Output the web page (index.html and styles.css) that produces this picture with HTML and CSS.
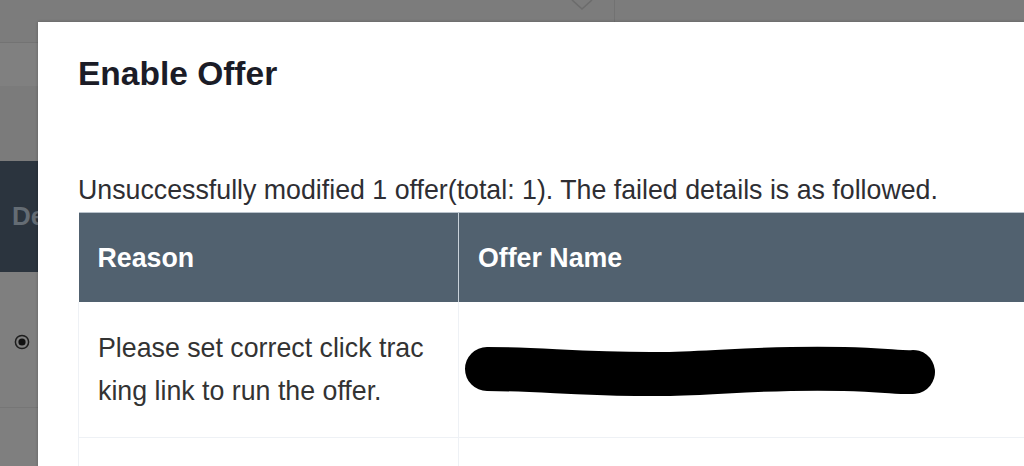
FILE: index.html
```html
<!DOCTYPE html>
<html lang="en">
<head>
<meta charset="utf-8">
<title>Enable Offer</title>
<link rel="stylesheet" href="styles.css">
</head>
<body>
<div class="page">
  <div class="bg">
    <div class="bg-top">
      <span class="bg-spacer"></span>
      <svg class="bg-chevron" width="22" height="12" viewBox="0 0 22 12"><path d="M1 1 L11 10 L21 1" fill="none" stroke="#6c6c6c" stroke-width="1.6"/></svg>
      <span class="bg-sep"></span>
    </div>
    <div class="bg-sub"></div>
    <div class="bg-gap"></div>
    <div class="bg-head">De</div>
    <div class="bg-row">
      <svg class="bg-radio" width="16" height="16" viewBox="0 0 16 16"><circle cx="8" cy="8" r="6.6" fill="none" stroke="#1e1e1e" stroke-width="1.5"/><circle cx="8" cy="8" r="3.6" fill="#111"/></svg>
    </div>
    <div class="bg-row2"></div>
  </div>

  <div class="modal">
    <h2 class="modal-title">Enable Offer</h2>
    <p class="modal-msg">Unsuccessfully modified 1 offer(total: 1). The failed details is as followed.</p>
    <table class="fail-table">
      <thead>
        <tr>
          <th class="col-reason">Reason</th>
          <th class="col-name">Offer Name</th>
        </tr>
      </thead>
      <tbody>
        <tr>
          <td class="col-reason">Please set correct click trac<br>king link to run the offer.</td>
          <td class="col-name">
            <svg class="redact" width="480" height="52" viewBox="0 0 480 52"><path d="M23 25 C 80 25, 120 31, 200 30 C 260 29, 300 23, 380 25 C 420 26, 440 29, 449 28" fill="none" stroke="#000" stroke-width="44" stroke-linecap="round"/></svg>
          </td>
        </tr>
        <tr class="row-empty">
          <td class="col-reason"></td>
          <td class="col-name"></td>
        </tr>
      </tbody>
    </table>
  </div>
</div>
</body>
</html>
```
FILE: styles.css
```css
html, body {
  margin: 0;
  padding: 0;
  width: 1024px;
  height: 466px;
  overflow: hidden;
  background: #7f7f7f;
  font-family: "Liberation Sans", Arial, Helvetica, sans-serif;
}

.page {
  position: relative;
  width: 1024px;
  height: 466px;
  overflow: hidden;
}

/* dimmed page behind the dialog */
.bg {
  display: flex;
  flex-direction: column;
}
.bg-top {
  height: 42px;
  background: #7c7c7c;
  border-bottom: 1px solid #737373;
  display: flex;
  align-items: flex-start;
}
.bg-spacer {
  width: 571px;
  flex: none;
}
.bg-chevron {
  display: block;
  margin-top: -1px;
}
.bg-sep {
  width: 1px;
  height: 22px;
  background: #727272;
  margin-left: 21px;
}
.bg-sub {
  height: 43px;
  background: #808080;
}
.bg-gap {
  height: 75px;
  background: #7b7b7b;
}
.bg-head {
  height: 111px;
  background: #2b343e;
  color: #646c74;
  font-weight: bold;
  font-size: 26px;
  line-height: 111px;
  padding-left: 12px;
}
.bg-row {
  height: 135px;
  background: #7f7f7f;
  border-bottom: 1px solid #767676;
  display: flex;
  align-items: center;
  padding-left: 14px;
}
.bg-radio {
  display: block;
  margin-top: 4px;
}
.bg-row2 {
  height: 60px;
  background: #7f7f7f;
}

/* dialog */
.modal {
  position: absolute;
  left: 38px;
  top: 22px;
  width: 1080px;
  height: 520px;
  background: #ffffff;
  box-shadow: 0 0 3px rgba(0, 0, 0, 0.25);
  padding: 32px 40px 0 40px;
  box-sizing: border-box;
}
.modal-title {
  margin: 0;
  font-size: 33.5px;
  line-height: 40px;
  font-weight: bold;
  color: #1b1c27;
}
.modal-msg {
  margin: 80px 0 0 0;
  font-size: 26.75px;
  line-height: 32px;
  color: #2e2e33;
  white-space: nowrap;
}

.fail-table {
  margin-top: 6px;
  border-collapse: collapse;
  width: 1000px;
  table-layout: fixed;
}
.fail-table th,
.fail-table td {
  box-sizing: border-box;
}
.fail-table th.col-reason,
.fail-table td.col-reason {
  width: 380px;
}
.fail-table th {
  background: #51616f;
  color: #ffffff;
  font-weight: bold;
  font-size: 26.75px;
  line-height: 32px;
  text-align: left;
  padding: 29px 19px 28px 19px;
  border-top: 1px solid #b9c3cc;
}
.fail-table th.col-name {
  border-left: 1px solid #c9d2da;
}
.fail-table td {
  font-size: 26.75px;
  line-height: 43px;
  color: #333333;
  padding: 25px 19px 24px 19px;
  border-bottom: 1px solid #eef1f5;
  vertical-align: middle;
  white-space: nowrap;
}
.fail-table td.col-reason {
  border-left: 1px solid #eef1f5;
  border-right: 1px solid #eef1f5;
}
.row-empty td {
  height: 40px;
}
.redact {
  display: block;
  margin-left: -14px;
}
```
